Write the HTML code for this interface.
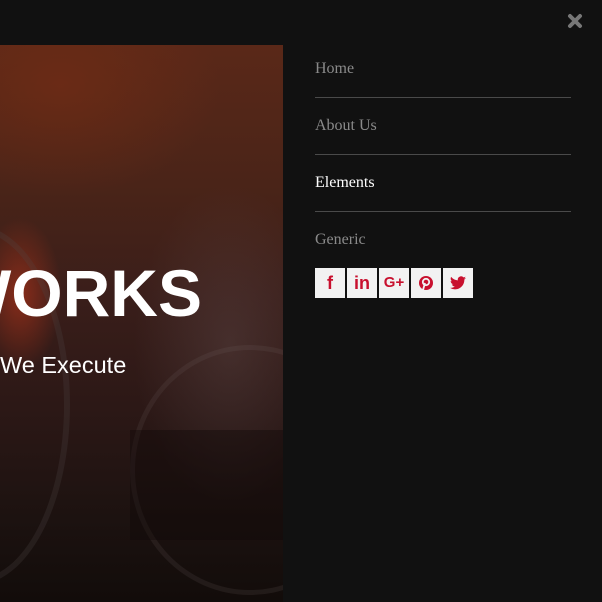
<!DOCTYPE html>
<html><head><style>
html,body{margin:0;padding:0;width:602px;height:602px;overflow:hidden;background:#111;}
.hero{position:absolute;left:0;top:45px;width:283px;height:557px;overflow:hidden;
background:
radial-gradient(ellipse 60px 110px at 20px 250px, rgba(170,50,25,0.7), rgba(170,50,25,0) 70%),
radial-gradient(ellipse 200px 140px at 60px 40px, rgba(120,45,20,0.6), rgba(0,0,0,0) 80%),
radial-gradient(ellipse 120px 200px at 230px 300px, rgba(110,90,90,0.3), rgba(0,0,0,0) 80%),
linear-gradient(180deg,#5a2818 0%,#4a2418 25%,#3a1e1a 45%,#2c1816 65%,#1c1210 85%,#120c0a 100%);}
.arc{position:absolute;border-radius:50%;box-sizing:border-box;}
.works{position:absolute;right:81px;top:208px;font:bold 66px "Liberation Sans",sans-serif;color:#fff;white-space:nowrap;line-height:80px;}
.sub{position:absolute;left:0px;top:307px;font:23.5px "Liberation Sans",sans-serif;color:#fff;white-space:nowrap;line-height:26px;}
.menu a{position:absolute;left:315px;font:16px "Liberation Serif",serif;color:#8a8a8a;text-decoration:none;}
.line{position:absolute;left:315px;width:256px;height:1px;background:#4a4a4a;}
.soc{position:absolute;top:268px;width:30px;height:30px;background:#f2f2f2;color:#c8102e;font:bold 18px "Liberation Sans",sans-serif;text-align:center;line-height:30px;}
</style></head><body>
<div class="hero">
 <div class="arc" style="left:130px;top:300px;width:240px;height:250px;border:5px solid rgba(120,110,110,0.15);"></div>
 <div class="arc" style="left:-120px;top:180px;width:190px;height:360px;border:6px solid rgba(80,70,70,0.25);"></div>
 <div style="position:absolute;left:130px;top:385px;width:153px;height:110px;background:rgba(15,8,8,0.4);"></div>
 <div class="works">WORKS</div>
 <div class="sub">We Execute</div>
</div>
<svg style="position:absolute;left:567px;top:13px" width="16" height="16" viewBox="0 0 16 16"><path d="M3 3L13 13M13 3L3 13" stroke="#777" stroke-width="4" stroke-linecap="round"/></svg>
<div class="menu">
<a style="top:60px">Home</a>
<div class="line" style="top:97px"></div>
<a style="top:117px">About Us</a>
<div class="line" style="top:154px"></div>
<a style="top:174px;color:#fff">Elements</a>
<div class="line" style="top:211px"></div>
<a style="top:231px">Generic</a>
</div>
<div class="soc" style="left:315px">f</div>
<div class="soc" style="left:347px">in</div>
<div class="soc" style="left:379px;font-size:15px">G+</div>
<div class="soc" style="left:411px"><svg width="16" height="16" viewBox="0 0 16 16" style="margin-top:7px"><circle cx="8" cy="8" r="7" fill="#c8102e"/><circle cx="8" cy="7" r="3.2" fill="none" stroke="#f2f2f2" stroke-width="1.8"/><path d="M7 8L5 15" stroke="#f2f2f2" stroke-width="1.8"/></svg></div>
<div class="soc" style="left:443px"><svg width="16" height="14" viewBox="0 0 24 20" style="margin-top:8px"><path fill="#c8102e" d="M24 2.4a10 10 0 0 1-2.8.8A5 5 0 0 0 23.3.4a10 10 0 0 1-3.1 1.2A4.9 4.9 0 0 0 11.8 6 14 14 0 0 1 1.7.9a4.9 4.9 0 0 0 1.5 6.6 4.9 4.9 0 0 1-2.2-.6 4.9 4.9 0 0 0 3.9 4.9 5 5 0 0 1-2.2.1 4.9 4.9 0 0 0 4.6 3.4A9.9 9.9 0 0 1 0 17.3 14 14 0 0 0 7.5 19.5c9 0 14-7.5 14-14v-.6A10 10 0 0 0 24 2.4z"/></svg></div>
</body></html>
